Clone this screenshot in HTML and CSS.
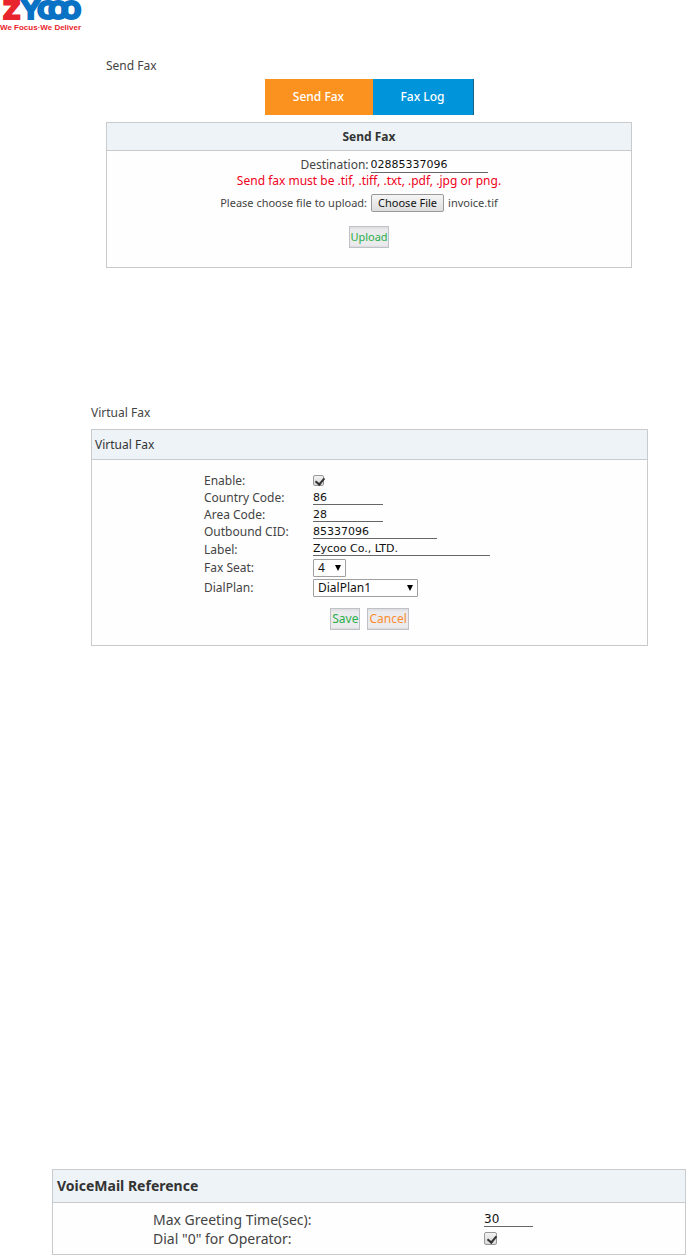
FILE: index.html
```html
<!DOCTYPE html>
<html lang="en">
<head>
<meta charset="utf-8">
<title>Zycoo Fax</title>
<link rel="stylesheet" href="styles.css">
</head>
<body>
<header class="brand">
  <svg class="logo" width="84" height="32" viewBox="0 0 84 32" role="img" aria-label="Zycoo, We Focus, We Deliver">
    <g class="logo-word">
      <text class="logo-blue" x="22 37 48 61" y="19">YCOO</text>
      <text class="logo-red" x="3" y="19">Z</text>
    </g>
    <text class="logo-tag" x="0" y="30">We Focus·We Deliver</text>
  </svg>
</header>
<main>
  <section class="send">
    <h1 class="title">Send Fax</h1>
    <nav class="tabs">
      <a class="tab tab-active" href="#send">Send Fax</a>
      <a class="tab" href="#log">Fax Log</a>
    </nav>
    <form class="panel" id="send">
      <h2 class="head head-center">Send Fax</h2>
      <div class="send-body">
        <div class="line line-dest">
          <label for="dest">Destination:</label>
          <input class="text text-dest" id="dest" type="text" value="02885337096">
        </div>
        <p class="warn">Send fax must be .tif, .tiff, .txt, .pdf, .jpg or png.</p>
        <div class="line line-file">
          <span>Please choose file to upload:</span>
          <input class="file" id="file" type="file">
          <label class="choose" for="file">Choose File</label>
          <output for="file">invoice.tif</output>
        </div>
        <button class="btn btn-upload green" type="button">Upload</button>
      </div>
    </form>
  </section>

  <section class="virtual">
    <h1 class="title">Virtual Fax</h1>
    <form class="panel">
      <h2 class="head head-light">Virtual Fax</h2>
      <div class="fields">
        <label for="enable">Enable:</label>
        <input class="check" id="enable" type="checkbox" checked>
        <label for="country">Country Code:</label>
        <input class="text text-short" id="country" type="text" value="86">
        <label for="area">Area Code:</label>
        <input class="text text-short" id="area" type="text" value="28">
        <label for="cid">Outbound CID:</label>
        <input class="text text-mid" id="cid" type="text" value="85337096">
        <label for="label">Label:</label>
        <input class="text text-long" id="label" type="text" value="Zycoo Co., LTD.">
        <label class="tall" for="seat">Fax Seat:</label>
        <span class="pick pick-seat"><select id="seat"><option>4</option></select></span>
        <label class="tall" for="plan">DialPlan:</label>
        <span class="pick pick-plan"><select id="plan"><option>DialPlan1</option></select></span>
      </div>
      <div class="actions">
        <button class="btn green" type="button">Save</button>
        <button class="btn orange" type="button">Cancel</button>
      </div>
    </form>
  </section>

  <section class="voicemail">
    <form class="panel">
      <h2 class="head head-voice">VoiceMail Reference</h2>
      <div class="vm-fields">
        <label for="greet">Max Greeting Time(sec):</label>
        <input class="text text-greet" id="greet" type="text" value="30">
        <label for="dial0">Dial "0" for Operator:</label>
        <input class="check check-big" id="dial0" type="checkbox" checked>
      </div>
    </form>
  </section>
</main>
</body>
</html>
```
FILE: styles.css
```css
* { box-sizing: border-box; }
body {
  margin: 0;
  background: #fff;
  color: #444;
  font: 12px/16px "Noto Sans", sans-serif;
}
h1, h2, p { margin: 0; }
button, input, select { font: inherit; margin: 0; }

.logo { display: block; overflow: visible; }
.logo-word { font: bold 24px "DejaVu Sans", sans-serif; stroke-width: 2px; }
.logo-red { fill: #e8252c; stroke: #e8252c; }
.logo-blue { fill: #0a72c4; stroke: #0a72c4; }
.logo-tag { font: bold 8px "Liberation Sans", sans-serif; fill: #e8252c; }

.title { font-size: 12px; font-weight: 400; line-height: 16px; }
.panel { border: 1px solid #c8cacc; background: #fefefe; }
.head {
  background: #edf3f7;
  border-bottom: 1px solid #c8cacc;
  color: #333;
  font-size: 12px;
  font-weight: 700;
}
.head-center { text-align: center; line-height: 27px; }
.head-light { font-weight: 400; line-height: 29px; padding-left: 3px; }
.head-voice { font-size: 14px; line-height: 32px; padding-left: 4px; }

.send { padding: 26px 55px 0 106px; }
.tabs { display: flex; justify-content: center; margin: 5px 0 7px; }
.tab {
  width: 101px;
  line-height: 36px;
  text-align: center;
  text-decoration: none;
  color: #fff;
  font-weight: 500;
  background: #0095da;
  border-right: 1px solid #17608a;
}
.tab-active { width: 108px; background: #fb9220; border: 0; }
.send-body {
  display: flex;
  flex-direction: column;
  align-items: center;
  padding: 6px 0 19px;
}
.line { display: flex; align-items: center; }
.line-dest { gap: 2px; margin-left: 50px; }
.warn { color: #f00020; line-height: 16px; }
.line-file {
  gap: 4px;
  margin: 5px 20px 14px 0;
  position: relative;
  font-size: 11px;
}
.file { position: absolute; width: 1px; height: 1px; opacity: 0; }
.choose {
  border: 1px solid #999;
  border-radius: 2px;
  background: linear-gradient(#f6f6f6, #dedede);
  color: #111;
  line-height: 16px;
  padding: 0 6px;
}

.text {
  border: 0;
  border-bottom: 1px solid #666;
  padding: 0;
  background: transparent;
  color: #111;
  font: 11px/14px "DejaVu Sans", sans-serif;
  height: 15px;
}
.text-dest { width: 117px; }
.text-short { width: 70px; }
.text-mid { width: 124px; }
.text-long { width: 177px; margin: 1px 0 2px; }
.text-greet { width: 49px; font-size: 12px; }

.btn {
  border: 1px solid #bec2c6;
  background: linear-gradient(#dcdcde, #ebebed 3px, #ebebed 18px, #dcdcde);
  height: 22px;
  padding: 0 1px;
}
.btn-upload { font-size: 11px; padding: 0; }
.green { color: #2aae4a; }
.orange { color: #fb8c30; }

.check {
  appearance: none;
  width: 11px;
  height: 11px;
  border: 1px solid #999;
  border-radius: 2px;
  background: linear-gradient(#f2f2f2, #d8d8d8);
  position: relative;
}
.check:checked::after {
  content: "";
  position: absolute;
  left: 3px;
  top: 0;
  width: 4px;
  height: 7px;
  border: solid #333;
  border-width: 0 2px 2px 0;
  transform: rotate(40deg);
}
.check-big { width: 13px; height: 13px; }
.check-big:checked::after { left: 4px; top: 1px; }

.virtual { padding: 137px 39px 0 91px; }
.virtual .title { margin-bottom: 8px; }
.fields {
  display: grid;
  grid-template-columns: 109px 1fr;
  align-items: center;
  line-height: 17px;
  padding: 12px 0 0 112px;
}
.tall { line-height: 20px; }
.pick { position: relative; justify-self: start; }
.pick select {
  appearance: none;
  display: block;
  width: 100%;
  height: 18px;
  border: 1px solid #a0a0a0;
  border-radius: 1px;
  background: #fff;
  color: #111;
  padding: 0 4px;
  line-height: 16px;
}
.pick::after {
  content: "";
  position: absolute;
  right: 5px;
  top: 6px;
  border: solid transparent;
  border-width: 6px 3px 0;
  border-top-color: #000;
}
.pick-seat { width: 33px; }
.pick-plan { width: 105px; }
.actions { display: flex; justify-content: center; gap: 7px; padding: 10px 0 15px; }

.voicemail { padding: 523px 1px 0 52px; }
.vm-fields {
  display: grid;
  grid-template-columns: 331px 1fr;
  align-items: center;
  font-size: 14px;
  line-height: 19px;
  padding: 7px 0 6px 100px;
}
```
